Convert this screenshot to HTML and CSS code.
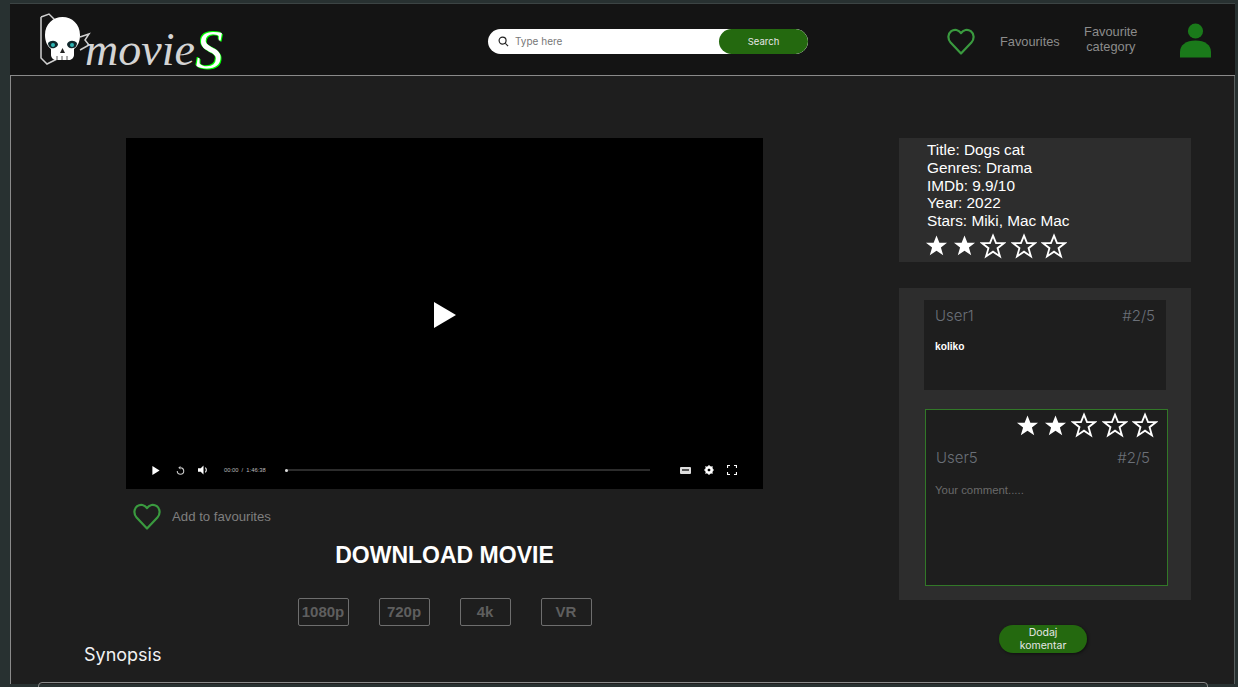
FILE: index.html
```html
<!DOCTYPE html>
<html lang="en">
<head>
  <meta charset="UTF-8">
  <title>Movies</title>
  <link rel="stylesheet" href="styles.css">
</head>
<body>
<svg class="defs" width="0" height="0">
  <symbol id="heart" viewBox="0 0 28 28">
    <path d="M14 26.5 3.6 15.6C.4 12 .8 6.8 4.2 4.2c3.4-2.5 7.400-1.500 9.800 2 2.400-3.500 6.400-4.500 9.800-2 3.400 2.600 3.800 7.800.6 11.400Z" fill="none" stroke="currentColor" stroke-width="2.200" stroke-linejoin="round"/>
  </symbol>
  <symbol id="star-on" viewBox="0 0 24 24">
    <path d="M12 1.500 15 9h8l-6.400 5 2.400 8.300L12 17.400 5 22.300 7.400 14 1 9h8Z" fill="#fff"/>
  </symbol>
  <symbol id="star-off" viewBox="0 0 24 24">
    <path d="M12 2.500 14.800 9.400H22l-5.800 4.600 2.200 7.600L12 17.200 5.600 21.600 7.800 14 2 9.400h7.200Z" fill="none" stroke="#fff" stroke-width="1.700"/>
  </symbol>
</svg>

<div class="page">
  <header class="topbar">
    <a class="logo" href="#">
      <svg class="skull" viewBox="0 0 54 56" width="54" height="56">
        <path d="M2 5V46L8 52 18 47M2 5 10 2 16 8M41 25 50 22 46 28 50 33 41 38" fill="none" stroke="#cfcfcf" stroke-width="1.500"/>
        <path d="M23.500 5C33 5 41 12 41 23c0 6-2 11-6 14v6c0 3-3 5-5 5H17c-2 0-5-2-5-5v-6C8 34 6 29 6 23 6 12 14 5 23.500 5Z" fill="#fff"/>
        <path d="M9 31c3-3 8-3 10 1 0 3-4 5-7 4-2-1-3-3-3-5ZM28 32c2-4 7-4 10-1 0 3-2 5-4 5-3 1-6-1-6-4Z" fill="#10282c"/>
        <circle cx="14" cy="33" r="2" fill="#2fb5b5"/>
        <circle cx="33" cy="33" r="2" fill="#2fb5b5"/>
        <path d="M23.500 36 26 41H21Z" fill="#222"/>
        <path d="M18 44V48M23 44V48M28 44V48" stroke="#555" stroke-width="1"/>
      </svg>
      <span class="logo-word">movie</span><span class="logo-s">S</span>
    </a>

    <form class="search">
      <svg class="search-icon" viewBox="0 0 12 12" width="11" height="11">
        <circle cx="5" cy="5" r="3.800" fill="none" stroke="#222" stroke-width="1.300"/>
        <path d="M8 8 11 11" stroke="#222" stroke-width="1.300"/>
      </svg>
      <span class="search-text">Type here</span>
      <span class="search-btn">Search</span>
    </form>

    <nav class="topnav">
      <svg class="heart heart-nav"><use href="#heart"/></svg>
      <a class="nav-link nav-fav" href="#">Favourites</a>
      <a class="nav-link nav-cat" href="#">Favourite category</a>
      <svg class="user" viewBox="0 0 31 35" width="31" height="35">
        <circle cx="15.500" cy="8" r="7.600" fill="#1a7a1a"/>
        <path d="M0 34.500V29C0 22 6 17.500 15.500 17.500S31 22 31 29v5.500Z" fill="#1a7a1a"/>
      </svg>
    </nav>
  </header>

  <main class="main">
    <div class="columns">
      <section class="left">
        <div class="player-wrap">
          <div class="video">
            <svg class="big-play" viewBox="0 0 22 26" width="22" height="26"><path d="M0 0 22 13 0 26Z" fill="#fff"/></svg>
            <div class="controls">
              <svg viewBox="0 0 8 10" width="8" height="9" class="c-play"><path d="M0 0 8 5 0 10Z" fill="#fff"/></svg>
              <svg viewBox="0 0 10 10" width="9" height="9" class="c-replay"><path d="M5 2a3.600 3.600 0 1 1-3.600 3.600" fill="none" stroke="#ccc" stroke-width="1.200"/><path d="M5 0 2.500 2 5 4Z" fill="#ccc"/></svg>
              <svg viewBox="0 0 12 10" width="11" height="10" class="c-vol"><path d="M0 3H3L6 0V10L3 7H0Z" fill="#fff"/><path d="M8 2.500a3.500 3.500 0 0 1 0 5" fill="none" stroke="#fff" stroke-width="1.200"/></svg>
              <span class="c-time">00:00 / 1:46:38</span>
              <div class="c-track"><i class="c-dot"></i></div>
              <span class="c-cc"><i class="c-cc-mark"></i></span>
              <svg viewBox="0 0 10 10" width="10" height="10" class="c-gear"><circle cx="5" cy="5" r="2.900" fill="none" stroke="#fff" stroke-width="2.200"/><path d="M5 0V10M0 5H10M1.500 1.500 8.500 8.500M8.500 1.500 1.500 8.500" stroke="#fff" stroke-width="1.100"/><circle cx="5" cy="5" r="1.300" fill="#000"/></svg>
              <svg viewBox="0 0 10 10" width="10" height="10" class="c-full"><path d="M.5 3V.5H3M7 .5H9.500V3M9.500 7V9.500H7M3 9.500H.5V7" fill="none" stroke="#fff" stroke-width="1.200"/></svg>
            </div>
          </div>

          <a class="add-fav" href="#">
            <svg class="heart"><use href="#heart"/></svg>
            <span>Add to favourites</span>
          </a>

          <h2 class="download-title">DOWNLOAD MOVIE</h2>
          <div class="qualities">
            <a class="quality" href="#">1080p</a>
            <a class="quality" href="#">720p</a>
            <a class="quality" href="#">4k</a>
            <a class="quality" href="#">VR</a>
          </div>
        </div>
        <h3 class="synopsis-title">Synopsis</h3>
      </section>

      <aside class="side">
        <div class="info">
          <p>Title: Dogs cat</p>
          <p>Genres: Drama</p>
          <p>IMDb: 9.9/10</p>
          <p>Year: 2022</p>
          <p>Stars: Miki, Mac Mac</p>
          <div class="stars">
            <svg class="star"><use href="#star-on"/></svg>
            <svg class="star"><use href="#star-on"/></svg>
            <svg class="star star-empty"><use href="#star-off"/></svg>
            <svg class="star star-empty"><use href="#star-off"/></svg>
            <svg class="star star-empty"><use href="#star-off"/></svg>
          </div>
        </div>

        <div class="comments">
          <div class="comment">
            <div class="comment-head"><span>User1</span><span>#2/5</span></div>
            <p class="comment-text">koliko</p>
          </div>
          <div class="comment-form">
            <div class="stars stars-right">
              <svg class="star"><use href="#star-on"/></svg>
              <svg class="star"><use href="#star-on"/></svg>
              <svg class="star star-empty"><use href="#star-off"/></svg>
              <svg class="star star-empty"><use href="#star-off"/></svg>
              <svg class="star star-empty"><use href="#star-off"/></svg>
            </div>
            <div class="comment-head form-head"><span>User5</span><span>#2/5</span></div>
            <p class="placeholder">Your comment.....</p>
          </div>
        </div>
        <a class="add-comment" href="#">Dodaj<br>komentar</a>
      </aside>
    </div>

    <div class="synopsis"></div>
  </main>
</div>
</body>
</html>
```

FILE: styles.css
```css
html, body {
  margin: 0;
  height: 100%;
  overflow: hidden;
}

body {
  background: #283131;
  font-family: "Liberation Sans", Arial, sans-serif;
}

.defs {
  position: absolute;
}

a {
  text-decoration: none;
}

.page {
  margin: 3px 3px 0 10px;
  height: 684px;
  border-top: 1px solid #3c4444;
  box-sizing: border-box;
  overflow: hidden;
}

/* header */
.topbar {
  height: 71px;
  background: #141414;
  border-bottom: 1px solid #8a8a8a;
  display: flex;
  align-items: center;
  padding-left: 29px;
  position: relative;
}

.logo {
  display: flex;
  align-items: flex-end;
  width: 449px;
  height: 56px;
  flex-shrink: 0;
  margin-top: 1px;
}

.skull {
  flex-shrink: 0;
  margin-right: -8px;
}

.logo-word {
  font-family: "Liberation Serif", serif;
  font-style: italic;
  font-size: 46px;
  line-height: 46px;
  color: #d4d4d4;
  margin-bottom: -5px;
}

.logo-s {
  font-family: "Liberation Serif", serif;
  font-style: italic;
  font-size: 54px;
  line-height: 46px;
  color: #fff;
  margin: 0 0 -5px 1px;
  text-shadow: 1px 1px 0 #0f0, -1px -1px 0 #0f0;
}

.search {
  width: 320px;
  height: 25px;
  background: #fff;
  border-radius: 13px;
  margin: 3px 0 0;
  display: flex;
  align-items: center;
  padding-left: 10px;
  box-sizing: border-box;
  flex-shrink: 0;
  overflow: hidden;
}

.search-icon {
  margin-right: 6px;
}

.search-text {
  flex: 1;
  font-family: Inter, sans-serif;
  font-size: 10px;
  color: #777;
}

.search-btn {
  width: 89px;
  height: 25px;
  line-height: 25px;
  text-align: center;
  background: #24690f;
  border-radius: 13px;
  color: #e6e6e6;
  font-family: Inter, sans-serif;
  font-size: 9.500px;
}

.topnav {
  display: flex;
  align-items: center;
  margin: 2px 0 0 139px;
}

.heart {
  width: 28px;
  height: 28px;
  color: #3a9a3f;
  flex-shrink: 0;
}

.nav-link {
  color: #8c8c8c;
  font-size: 12.800px;
  line-height: 15px;
  text-align: center;
}

.nav-fav {
  margin: 1px 0 0 25px;
}

.nav-cat {
  width: 56px;
  margin-left: 23px;
  margin-top: -4px;
}

.user {
  margin-left: 41px;
  margin-top: -1px;
}

/* main */
.main {
  height: 608px;
  background: #1e1e1e;
  border-left: 1px solid #8a8a8a;
  border-right: 1px solid #5a6060;
  box-sizing: border-box;
}

.columns {
  display: flex;
  padding-top: 62px;
  height: 545px;
  box-sizing: border-box;
}

.left {
  width: 752px;
  padding-left: 73px;
  box-sizing: border-box;
  flex-shrink: 0;
}

.player-wrap {
  margin-left: 42px;
  width: 637px;
}

.video {
  height: 351px;
  background: #000;
  position: relative;
}

.big-play {
  position: absolute;
  left: 308px;
  top: 164px;
}

.controls {
  position: absolute;
  left: 0;
  right: 0;
  top: 326px;
  height: 12px;
  display: flex;
  align-items: center;
}

.c-play {
  margin-left: 26px;
}

.c-replay {
  margin-left: 16px;
}

.c-vol {
  margin-left: 13px;
}

.c-time {
  margin-left: 15px;
  width: 61px;
  font-size: 5.800px;
  word-spacing: 1.500px;
  color: #bbb;
}

.c-track {
  width: 365px;
  height: 2px;
  background: #2c2c2c;
  position: relative;
}

.c-dot {
  position: absolute;
  left: 0;
  top: -0.500px;
  width: 3px;
  height: 3px;
  border-radius: 50%;
  background: #ddd;
}

.c-cc {
  width: 11px;
  height: 7px;
  margin-left: 30px;
  background: #ddd;
  border-radius: 1px;
  display: flex;
  align-items: center;
  justify-content: center;
}

.c-cc-mark {
  width: 7px;
  height: 2px;
  background: #555;
}

.c-gear {
  margin-left: 13px;
}

.c-full {
  margin-left: 13px;
}

.add-fav {
  display: flex;
  align-items: center;
  gap: 11px;
  margin: 13px 0 0 7px;
  color: #7f7f7f;
  font-size: 13.200px;
}

.download-title {
  margin: 12px 0 0;
  text-align: center;
  color: #fff;
  font-size: 23px;
  line-height: 27px;
}

.qualities {
  display: flex;
  justify-content: center;
  gap: 30px;
  margin-top: 29px;
}

.quality {
  width: 51px;
  height: 28px;
  box-sizing: border-box;
  border: 1px solid #6e6e6e;
  border-radius: 2px;
  color: #5f5f5f;
  font-size: 15px;
  font-weight: bold;
  line-height: 26px;
  text-align: center;
}

.synopsis-title {
  margin: 18px 0 0;
  font-family: Inter, sans-serif;
  font-weight: 400;
  font-size: 18px;
  line-height: 22px;
  color: #f2f2f2;
}

/* right side */
.side {
  margin-left: 136px;
  width: 292px;
  flex-shrink: 0;
}

.info {
  height: 124px;
  background: #2d2d2d;
  padding: 3px 0 0 28px;
  box-sizing: border-box;
  color: #fff;
  font-size: 15.360px;
  line-height: 17.750px;
}

.info p {
  margin: 0;
}

.stars {
  display: flex;
  align-items: center;
  gap: 4.500px;
  margin: 3px 0 0 -2px;
}

.star {
  width: 23px;
  height: 23px;
}

.star-empty {
  width: 26px;
  height: 26px;
}

.comments {
  margin-top: 26px;
  height: 312px;
  background: #2d2d2d;
  padding: 12px 0 0 25px;
  box-sizing: border-box;
}

.comment {
  width: 242px;
  height: 90px;
  background: #1e1e1e;
  padding: 6px 11px 0;
  box-sizing: border-box;
}

.comment-head {
  display: flex;
  justify-content: space-between;
  font-family: Inter, sans-serif;
  font-size: 15px;
  line-height: 20px;
  font-weight: 300;
  color: #6b7078;
}

.comment-text {
  margin: 15px 0 0;
  color: #fff;
  font-size: 10.200px;
  font-weight: bold;
}

.comment-form {
  width: 243px;
  height: 177px;
  margin: 19px 0 0 1px;
  background: #1e1e1e;
  border: 1px solid rgb(50, 120, 40);
  box-sizing: border-box;
  padding-top: 2px;
}

.stars-right {
  justify-content: flex-end;
  padding-right: 9px;
  margin: 0;
}

.form-head {
  margin-top: 10px;
  padding: 0 17px 0 10px;
}

.placeholder {
  margin: 16px 0 0 9px;
  font-size: 11.400px;
  color: #6a6a6a;
}

.add-comment {
  display: block;
  width: 88px;
  height: 28px;
  margin: 25px 0 0 100px;
  padding-top: 1px;
  box-sizing: border-box;
  background: #24690f;
  border-radius: 14px;
  box-shadow: 1px 1px 3px rgba(0, 0, 0, 0.5);
  color: #e6e6e6;
  font-family: Inter, sans-serif;
  font-size: 10.500px;
  line-height: 13px;
  text-align: center;
}

.synopsis {
  margin: 61px 26px 0 27px;
  height: 100px;
  border: 1px solid #8a8a8a;
  border-radius: 4px;
}
```
